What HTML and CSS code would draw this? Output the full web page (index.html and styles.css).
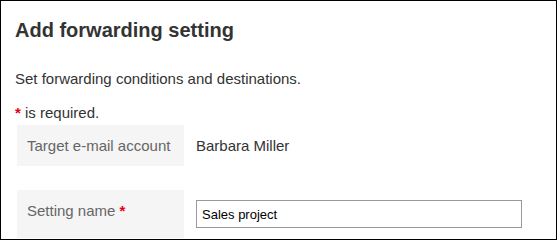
FILE: index.html
```html
<!DOCTYPE html>
<html lang="en">
<head>
<meta charset="utf-8">
<title>Add forwarding setting</title>
<link rel="stylesheet" href="styles.css">
</head>
<body>
<div class="frame">
  <h1 class="title">Add forwarding setting</h1>
  <p class="lead">Set forwarding conditions and destinations.</p>
  <p class="note"><span class="req">*</span> is required.</p>
  <div class="form">
    <div class="label">Target e-mail account</div>
    <div class="value">Barbara Miller</div>
    <div class="label">Setting name <span class="req">*</span></div>
    <div class="value"><input class="field" type="text" value="Sales project"></div>
  </div>
</div>
</body>
</html>
```

FILE: styles.css
```css
html, body {
  margin: 0;
  padding: 0;
}
body {
  font-family: "Liberation Sans", Arial, sans-serif;
  color: #333;
  background: #fff;
}
.frame {
  box-sizing: border-box;
  width: 557px;
  height: 240px;
  border: 1px solid #000;
  padding: 17px 0 0 14px;
  overflow: hidden;
}
.title {
  margin: 0;
  font-size: 20px;
  line-height: 24px;
  font-weight: bold;
  color: #333;
}
.lead {
  margin: 26px 0 0;
  font-size: 15px;
  line-height: 21px;
}
.note {
  margin: 13px 0 0;
  font-size: 15px;
  line-height: 21px;
}
.req {
  color: #e60012;
  font-weight: bold;
}
.form {
  margin: 2px 0 0 2px;
  display: grid;
  grid-template-columns: 167px 1fr;
  column-gap: 12px;
  row-gap: 24px;
  font-size: 15px;
  line-height: 21px;
}
.label {
  background: #f5f5f5;
  color: #666;
  padding: 10px 10px;
}
.value {
  padding: 10px 0;
  color: #333;
}
.field {
  box-sizing: border-box;
  width: 326px;
  height: 28px;
  margin: 0;
  border: 1px solid #999;
  padding: 0 5px;
  font-family: "Liberation Sans", Arial, sans-serif;
  font-size: 13px;
  color: #000;
  background: #fff;
  display: block;
}
```
